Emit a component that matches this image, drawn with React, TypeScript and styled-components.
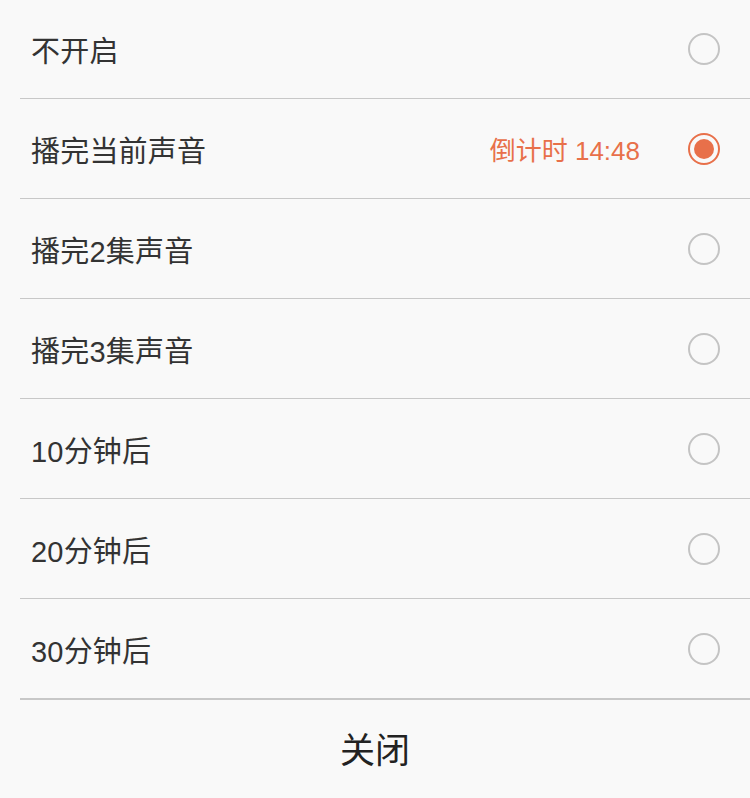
import React, {useState} from 'react'
import styled, {createGlobalStyle} from 'styled-components'

const GlobalStyle = createGlobalStyle`
  html, body {
    margin: 0;
    padding: 0;
    background: #f9f9f9;
  }
  body {
    font-family: "Liberation Sans", "Noto Sans CJK SC", sans-serif;
  }
`

const Sheet = styled.div`
  width: 750px;
  height: 798px;
  display: flex;
  flex-direction: column;
  background: #f9f9f9;
`

const List = styled.ul`
  list-style: none;
  margin: 0;
  padding: 0 0 0 20px;
`

const Row = styled.li`
  box-sizing: border-box;
  height: 100px;
  display: flex;
  align-items: center;
  padding: 0 30px 0 11px;
  border-bottom: 1px solid #c8c8c8;
  cursor: pointer;
  &:first-child {
    height: 99px;
  }
  &:last-child {
    height: 101px;
    border-bottom-width: 2px;
  }
`

const Label = styled.span`
  flex: 1;
  font-size: 29px;
  color: #333;
  letter-spacing: 0.2px;
`

const Countdown = styled.span`
  font-size: 26px;
  color: #e8704a;
  margin-right: 48px;
`

const Radio = styled.span<{$checked: boolean}>`
  box-sizing: border-box;
  width: 32px;
  height: 32px;
  border-radius: 50%;
  border: 2px solid ${p => (p.$checked ? '#e8704a' : '#c4c4c4')};
  display: flex;
  align-items: center;
  justify-content: center;
  &::after {
    content: '';
    display: ${p => (p.$checked ? 'block' : 'none')};
    width: 20px;
    height: 20px;
    border-radius: 50%;
    background: #e8704a;
  }
`

const CloseButton = styled.button`
  flex: 1;
  border: none;
  background: transparent;
  font-family: "Liberation Sans", "Noto Sans CJK SC", sans-serif;
  font-size: 35px;
  color: #222;
  padding: 0 0 4px;
  cursor: pointer;
`

const options = ['不开启', '播完当前声音', '播完2集声音', '播完3集声音', '10分钟后', '20分钟后', '30分钟后']

const App: React.FC = () => {
  const [selected, setSelected] = useState(1)
  return (
    <Sheet>
      <GlobalStyle />
      <List>
        {options.map((label, i) => (
          <Row key={label} onClick={() => setSelected(i)}>
            <Label>{label}</Label>
            {selected === i && i === 1 && <Countdown>倒计时 14:48</Countdown>}
            <Radio $checked={selected === i} />
          </Row>
        ))}
      </List>
      <CloseButton>关闭</CloseButton>
    </Sheet>
  )
}

export default App
